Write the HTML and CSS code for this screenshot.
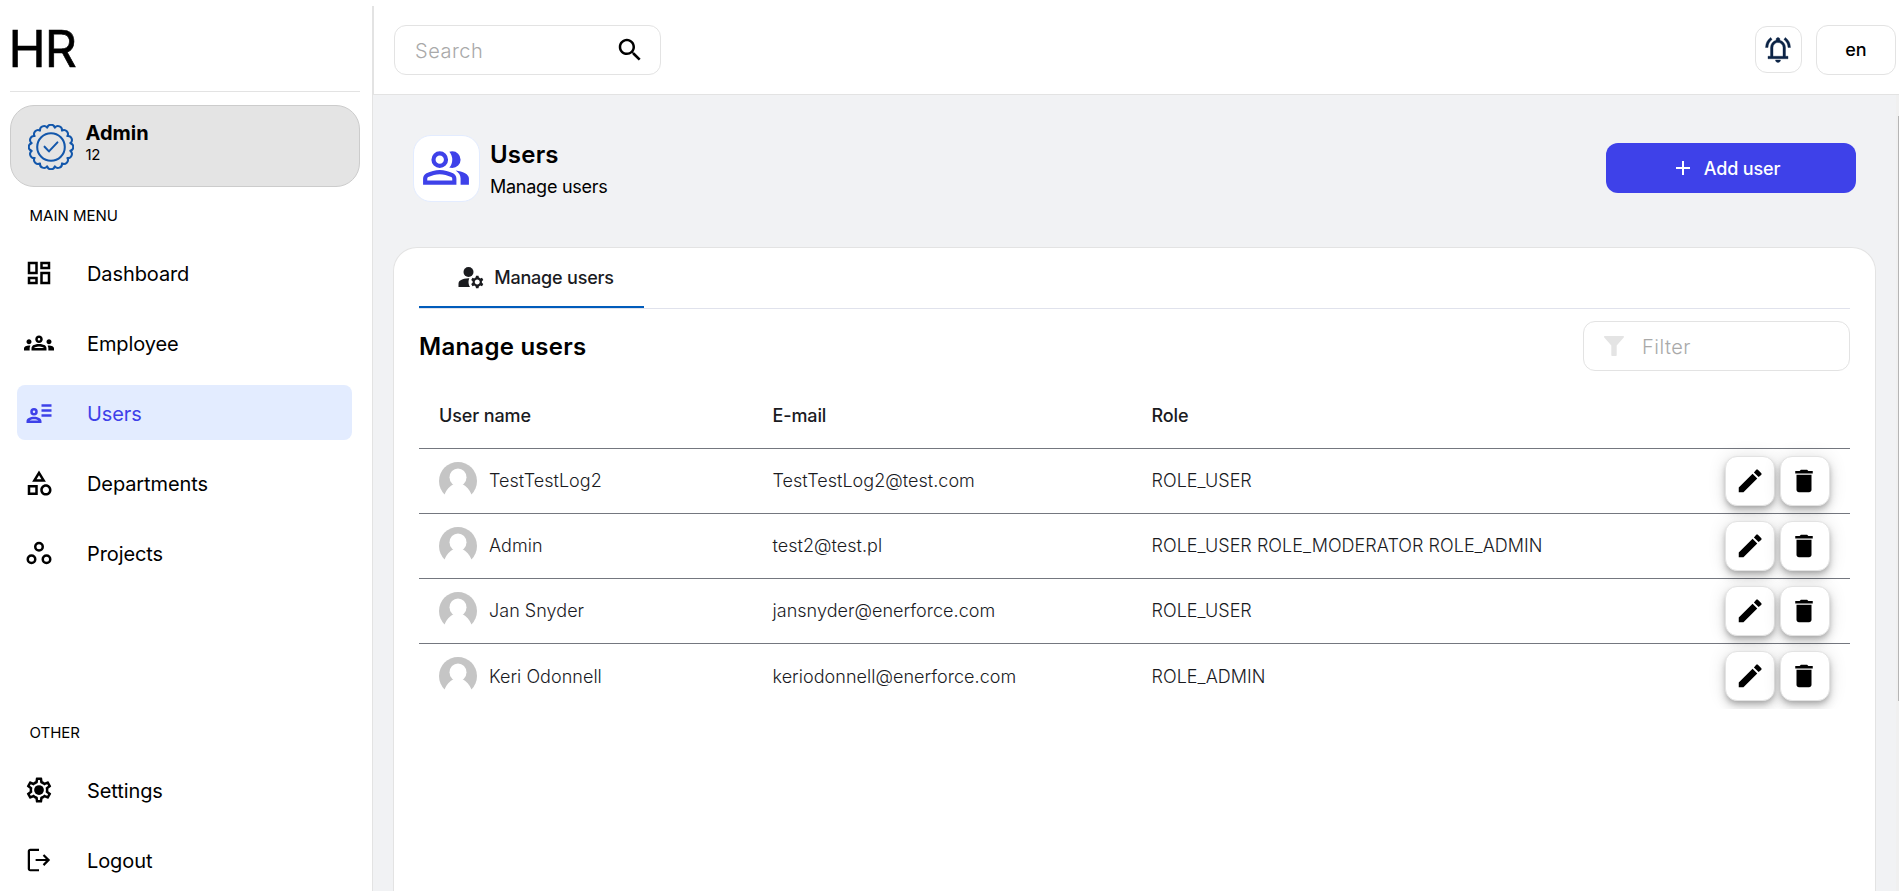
FILE: index.html
```html
<!DOCTYPE html>
<html lang="en">
<head>
<meta charset="utf-8">
<title>HR</title>
<link rel="stylesheet" href="styles.css">
</head>
<body>
<svg class="defs" aria-hidden="true">
  <symbol id="i-avatar" viewBox="0 0 38 38"><circle cx="19" cy="19" r="19" fill="#c5c5c5"/><ellipse cx="19" cy="15.3" rx="8.5" ry="8.9" fill="#fff"/><path fill="#fff" d="M5.6 32.3C7.6 27.6 10.4 24.2 14.6 22h8.8c4.2 2.200 7 5.600 9 10.300L38 38.500H0z"/></symbol>
  <symbol id="i-edit" viewBox="0 0 24 24"><path d="M3 17.250V21h3.750L17.810 9.940l-3.750-3.750L3 17.250zM20.900 7.200c.5-.5.5-1.200 0-1.700l-2.400-2.400c-.5-.5-1.200-.5-1.700 0l-1.670 2.020 3.750 3.750 2.020-1.670z"/></symbol>
  <symbol id="i-delete" viewBox="0 0 24 24"><path d="M6 19c0 1.100.9 2 2 2h8c1.100 0 2-.9 2-2V7H6v12zM19 4h-3.500l-1-1h-5l-1 1H5v2h14V4z"/></symbol>
</svg>
<aside class="sidebar">
  <div class="brand">HR</div>
  <div class="profile">
    <svg class="badge" viewBox="-22.500 -22.500 45 45">
      <path d="M18.930 -3.770A3.900 3.900 0 0 1 18.930 3.770A3.900 3.900 0 0 1 16.050 10.720A3.900 3.900 0 0 1 10.720 16.050A3.900 3.900 0 0 1 3.770 18.930A3.900 3.900 0 0 1 -3.770 18.930A3.900 3.900 0 0 1 -10.720 16.050A3.900 3.900 0 0 1 -16.050 10.720A3.900 3.900 0 0 1 -18.930 3.770A3.900 3.900 0 0 1 -18.930 -3.770A3.900 3.900 0 0 1 -16.050 -10.720A3.900 3.900 0 0 1 -10.720 -16.050A3.900 3.900 0 0 1 -3.770 -18.930A3.900 3.900 0 0 1 3.770 -18.930A3.900 3.900 0 0 1 10.720 -16.050A3.900 3.900 0 0 1 16.050 -10.720A3.900 3.900 0 0 1 18.930 -3.770Z"/>
      <circle r="13.500"/><path d="M-6.300 -.3L-2 4.300L6.300 -4.500"/>
    </svg>
    <div class="profile-text"><strong>Admin</strong><span>12</span></div>
  </div>
  <div class="group-label">MAIN MENU</div>
  <nav class="menu">
    <a class="item"><svg viewBox="0 0 24 24"><path d="M19 5v2h-4V5h4M9 5v6H5V5h4m10 8v6h-4v-6h4M9 17v2H5v-2h4M21 3h-8v6h8V3zM11 3H3v10h8V3zm10 8h-8v10h8V11zm-10 4H3v6h8v-6z"/></svg><span>Dashboard</span></a>
    <a class="item"><svg viewBox="0 0 24 24"><path d="M4,13c1.100,0,2-0.900,2-2c0-1.100-0.900-2-2-2s-2,0.900-2,2C2,12.100,2.900,13,4,13z M5.130,14.100C4.760,14.040,4.390,14,4,14c-0.990,0-1.930,0.210-2.780,0.580C0.480,14.900,0,15.620,0,16.430V18l4.500,0v-1.610C4.500,15.560,4.730,14.780,5.130,14.100z M20,13c1.100,0,2-0.900,2-2c0-1.100-0.900-2-2-2s-2,0.900-2,2C18,12.100,18.900,13,20,13z M24,16.430c0-0.810-0.480-1.530-1.220-1.850C21.930,14.210,20.990,14,20,14c-0.390,0-0.760,0.040-1.130,0.100c0.400,0.680,0.630,1.460,0.630,2.290V18l4.500,0V16.430z M16.240,13.650c-1.170-0.520-2.610-0.900-4.240-0.900c-1.630,0-3.070,0.390-4.240,0.900C6.680,14.130,6,15.210,6,16.390V18h12v-1.610C18,15.210,17.320,14.130,16.240,13.650z M8.070,16c0.090-0.230,0.130-0.390,0.910-0.690c0.970-0.380,1.990-0.560,3.020-0.560s2.050,0.180,3.020,0.560c0.770,0.300,0.810,0.460,0.910,0.690H8.070z M12,8c0.550,0,1,0.450,1,1s-0.450,1-1,1s-1-0.450-1-1S11.450,8,12,8 M12,6c-1.660,0-3,1.340-3,3c0,1.660,1.340,3,3,3s3-1.340,3-3C15,7.340,13.660,6,12,6z"/></svg><span>Employee</span></a>
    <a class="item active"><svg viewBox="0 0 24 24"><path d="M14 5h8v2h-8zM14 9h8v2h-8zM14 13h8v2h-8z"/><circle cx="8" cy="11" r="2" fill="none" stroke="currentColor" stroke-width="2"/><path fill-rule="evenodd" d="M2 20v-1.500C2 16.300 5 15 8 15s6 1.300 6 3.500V20zM4.500 18h7c-.8-.6-2.200-1-3.500-1s-2.700.4-3.500 1z"/></svg><span>Users</span></a>
    <a class="item"><svg viewBox="0 0 24 24"><path d="M12 2l-5.500 9h11L12 2zm0 3.840L13.930 9h-3.870L12 5.840zM17.500 13c-2.490 0-4.500 2.010-4.500 4.500s2.010 4.500 4.500 4.500 4.500-2.010 4.500-4.500-2.010-4.500-4.500-4.500zm0 7c-1.380 0-2.500-1.120-2.500-2.500s1.120-2.500 2.500-2.500 2.500 1.120 2.500 2.500-1.120 2.500-2.500 2.500zM3 21.500h8v-8H3v8zm2-6h4v4H5v-4z"/></svg><span>Departments</span></a>
    <a class="item"><svg viewBox="0 0 24 24" class="rings"><circle cx="12" cy="7" r="3"/><circle cx="6" cy="17" r="3"/><circle cx="18" cy="17" r="3"/></svg><span>Projects</span></a>
  </nav>
  <div class="group-label other">OTHER</div>
  <nav class="menu">
    <a class="item"><svg viewBox="0 0 24 24"><path d="M19.430 12.980c.04-.32.07-.64.07-.98 0-.34-.03-.66-.07-.98l2.110-1.650c.19-.15.24-.42.12-.64l-2-3.460c-.09-.16-.26-.25-.44-.25-.06 0-.12.01-.17.03l-2.490 1c-.52-.4-1.080-.73-1.690-.98l-.38-2.650C14.460 2.180 14.250 2 14 2h-4c-.25 0-.46.18-.49.42l-.38 2.650c-.61.25-1.170.59-1.690.98l-2.490-1c-.06-.02-.12-.03-.18-.03-.17 0-.34.09-.43.25l-2 3.460c-.13.22-.07.49.12.64l2.110 1.650c-.04.32-.07.65-.07.98 0 .33.03.66.07.98l-2.110 1.650c-.19.15-.24.42-.12.64l2 3.460c.09.16.26.25.44.25.06 0 .12-.01.17-.03l2.490-1c.52.4 1.080.73 1.690.98l.38 2.650c.03.24.24.42.49.42h4c.25 0 .46-.18.49-.42l.38-2.650c.61-.25 1.170-.59 1.690-.98l2.490 1c.06.02.12.03.18.03.17 0 .34-.09.43-.25l2-3.460c.12-.22.07-.49-.12-.64l-2.110-1.650zm-1.980-1.710c.04.31.05.52.05.73 0 .21-.02.43-.05.73l-.14 1.130.89.7 1.080.84-.7 1.210-1.270-.51-1.040-.42-.9.68c-.43.32-.84.56-1.250.73l-1.060.43-.16 1.130-.2 1.350h-1.400l-.19-1.350-.16-1.130-1.060-.43c-.43-.18-.83-.41-1.230-.71l-.91-.7-1.060.43-1.270.51-.7-1.210 1.080-.84.89-.7-.14-1.130c-.03-.31-.05-.54-.05-.74s.02-.43.05-.73l.14-1.130-.89-.7-1.080-.84.7-1.210 1.270.51 1.040.42.9-.68c.43-.32.84-.56 1.250-.73l1.060-.43.16-1.130.2-1.350h1.390l.19 1.350.16 1.130 1.060.43c.43.18.83.41 1.230.71l.91.7 1.060-.43 1.270-.51.7 1.210-1.070.85-.89.7.14 1.130z"/><circle cx="12" cy="12" r="3.900"/></svg><span>Settings</span></a>
    <a class="item"><svg viewBox="0 0 24 24"><path d="M5 21q-.825 0-1.412-.587T3 19V5q0-.825.588-1.412T5 3h7v1.700H4.800v14.600H12V21zm11.200-4.300l-1.200-1.300l2.500-2.550H9.300v-1.700h8.200l-2.500-2.550l1.200-1.300l4.700 4.700z"/></svg><span>Logout</span></a>
  </nav>
</aside>
<div class="page">
  <header class="topbar">
    <div class="search"><span>Search</span><svg viewBox="0 0 24 24"><path d="M15.500 14h-.79l-.28-.27C15.410 12.590 16 11.110 16 9.500 16 5.910 13.090 3 9.500 3S3 5.910 3 9.500 5.910 16 9.500 16c1.610 0 3.090-.59 4.230-1.570l.27.28v.79l5 4.990L20.490 19l-4.990-5zm-6 0C7.010 14 5 11.990 5 9.500S7.010 5 9.500 5 14 7.010 14 9.500 11.990 14 9.500 14z"/></svg></div>
    <div class="tools">
      <button class="bell"><svg viewBox="0 0 24 24"><path d="M4 19v-2h2v-7q0-2.075 1.250-3.687T10.500 4.200v-.7q0-.625.438-1.062T12 2t1.063.438T13.500 3.500v.7q2 .5 3.250 2.113T18 10v7h2v2zm8 3q-.825 0-1.412-.587T10 20h4q0 .825-.587 1.413T12 22m-4-5h8v-7q0-1.650-1.175-2.825T12 6T9.175 7.175T8 10zM2 10q0-2.500 1.113-4.587T6.100 1.950l1.175 1.600q-1.500 1.100-2.387 2.775T4 10zm18 0q0-2-.888-3.675T16.726 3.550l1.175-1.600q1.875 1.375 2.988 3.463T22 10z"/></svg></button>
      <button class="lang">en</button>
    </div>
  </header>
  <main class="main">
    <section class="title-row">
      <div class="title-icon"><svg viewBox="0 0 24 24"><path d="M1 20v-2.800q0-.85.438-1.562T2.600 14.550q1.550-.775 3.150-1.162T9 13t3.250.388t3.150 1.162q.725.375 1.163 1.088T17 17.200V20zm18 0v-3q0-1.100-.612-2.113T16.650 13.150q1.275.15 2.400.513t2.100.887q.9.5 1.375 1.112T23 17v3zM9 12q-1.650 0-2.825-1.175T5 8t1.175-2.825T9 4t2.825 1.175T13 8t-1.175 2.825T9 12m10-4q0 1.650-1.175 2.825T15 12q-.275 0-.7-.062t-.7-.138q.675-.8 1.037-1.775T15 8t-.362-2.025T13.600 4.200q.35-.125.7-.163T15 4q1.650 0 2.825 1.175T19 8M3 18h12v-.8q0-.275-.137-.5t-.363-.35q-1.350-.675-2.725-1.012T9 15t-2.775.338T3.500 16.350q-.225.125-.363.35T3 17.200zm6-8q.825 0 1.413-.587T11 8t-.587-1.412T9 6t-1.412.588T7 8t.588 1.413T9 10"/></svg></div>
      <div class="title-text"><h1>Users</h1><p>Manage users</p></div>
      <button class="add"><svg viewBox="0 0 14 14"><path d="M6 0h2v6h6v2H8v6H6V8H0V6h6z"/></svg>Add user</button>
    </section>
    <section class="card">
      <div class="tabs"><div class="tab"><svg viewBox="0 0 24 24"><circle cx="10" cy="8" r="4"/><path d="M10.670 13.020C10.450 13.010 10.230 13 10 13c-2.420 0-4.680.67-6.610 1.820-.88.52-1.390 1.500-1.390 2.530V20h9.260c-.79-1.130-1.260-2.510-1.260-4 0-1.070.25-2.070.67-2.980zM20.750 16c0-.22-.03-.42-.06-.63l1.140-1.010-1-1.730-1.450.49c-.32-.27-.68-.48-1.080-.63L18 11h-2l-.3 1.490c-.4.15-.76.36-1.080.63l-1.450-.49-1 1.730 1.140 1.010c-.03.21-.06.41-.06.63s.03.42.06.63l-1.140 1.010 1 1.730 1.450-.49c.32.27.68.48 1.080.63L16 21h2l.3-1.490c.4-.15.76-.36 1.080-.63l1.450.49 1-1.730-1.140-1.010c.03-.21.06-.41.06-.63zM17 18c-1.100 0-2-.9-2-2s.9-2 2-2 2 .9 2 2-.9 2-2 2z"/></svg>Manage users</div></div>
      <div class="card-head"><h2>Manage users</h2>
        <div class="filter"><svg viewBox="0 0 20 20"><path d="M.8 0h18.400q.8 0 .8.800 0 .4-.3.800L12.700 9.500V19.200q0 .8-.8.800H8.100q-.8 0-.8-.8V9.500L.3 1.600Q0 1.200 0 .8 0 0 .8 0z"/></svg><span>Filter</span></div></div>
      <div class="table">
        <div class="row head"><span>User name</span><span>E-mail</span><span>Role</span></div>
        <div class="row"><span class="user"><svg><use href="#i-avatar"/></svg><span>TestTestLog2</span></span><span>TestTestLog2@test.com</span><span>ROLE_USER</span><div class="actions"><button class="edit"><svg><use href="#i-edit"/></svg></button><button><svg><use href="#i-delete"/></svg></button></div></div>
        <div class="row"><span class="user"><svg><use href="#i-avatar"/></svg><span>Admin</span></span><span>test2@test.pl</span><span>ROLE_USER ROLE_MODERATOR ROLE_ADMIN</span><div class="actions"><button class="edit"><svg><use href="#i-edit"/></svg></button><button><svg><use href="#i-delete"/></svg></button></div></div>
        <div class="row"><span class="user"><svg><use href="#i-avatar"/></svg><span>Jan Snyder</span></span><span>jansnyder@enerforce.com</span><span>ROLE_USER</span><div class="actions"><button class="edit"><svg><use href="#i-edit"/></svg></button><button><svg><use href="#i-delete"/></svg></button></div></div>
        <div class="row last"><span class="user"><svg><use href="#i-avatar"/></svg><span>Keri Odonnell</span></span><span>keriodonnell@enerforce.com</span><span>ROLE_ADMIN</span><div class="actions"><button class="edit"><svg><use href="#i-edit"/></svg></button><button><svg><use href="#i-delete"/></svg></button></div></div>
      </div>
    </section>
    <div class="scrollbar"><div class="thumb"></div></div>
  </main>
</div>
</body>
</html>
```
FILE: styles.css
```css
* { box-sizing: border-box; }
html, body { height: 100%; }
body {
  margin: 0;
  padding-top: 6px;
  display: flex;
  overflow: hidden;
  background: #fff;
  color: #000;
  font-family: Inter, sans-serif;
}
h1, h2, p { margin: 0; }
button { font-family: inherit; padding: 0; margin: 0; background: #fff; color: #000; }
svg { display: block; flex: none; fill: currentColor; }
.defs { position: absolute; width: 0; height: 0; }

/* Sidebar */
.sidebar { flex: none; width: 373px; padding: 0 12px 0 10px; border-right: 1px solid #e3e3e3; overflow: hidden; }
.brand { height: 86px; padding-top: 13px; border-bottom: 1px solid #e3e3e3; font-size: 50px; line-height: 60px; letter-spacing: -1px; text-indent: -1.5px; -webkit-text-stroke: .6px #000; }
.profile {
  height: 82px; margin-top: 13px; padding-left: 18px;
  display: flex; gap: 12px;
  background: #e4e4e4; border: 1px solid #ccc; border-radius: 24px;
}
.badge { width: 46px; height: 46px; margin: 18px -.5px 0 -1px; fill: none; stroke: #1357ab; stroke-width: 2; stroke-linejoin: round; stroke-linecap: round; }
.profile-text { display: flex; flex-direction: column; padding-top: 15px; }
.profile-text strong { font-size: 20px; line-height: 24px; font-weight: 700; }
.profile-text span { font-size: 15px; line-height: 20px; letter-spacing: -.3px; }
.group-label { margin: 19px 0 0 19.500px; font-size: 15px; line-height: 20px; height: 20px; }
.menu { display: flex; flex-direction: column; gap: 15px; padding: 19px 8px 0 7px; }
.item { height: 55px; display: flex; align-items: center; gap: 32px; padding-left: 7px; border-radius: 8px; font-size: 20px; }
.item span { padding: 2px 0 0 1px; letter-spacing: -.1px; }
.item svg { width: 30px; height: 30px; }
.item.active { background: #e3ecff; color: #3e41e9; }
.rings { fill: none; stroke: currentColor; stroke-width: 2; }
.group-label.other { margin-top: 143px; }

/* Top bar */
.page { flex: 1; min-width: 0; display: flex; flex-direction: column; }
.topbar {
  flex: none; height: 89px; padding: 18px 3px 0 20px;
  display: flex; justify-content: space-between; align-items: flex-start;
  border-left: 1px solid #e3e3e3; border-bottom: 1px solid #e3e3e3;
}
.search {
  width: 267px; height: 50px; margin-top: 1px; padding: 0 15px 0 20px;
  display: flex; align-items: center; justify-content: space-between;
  border: 1px solid #e3e3e3; border-radius: 12px;
}
.search span, .filter span { padding-top: 2px; color: #a9a9a9; font-size: 20px; font-weight: 300; letter-spacing: .5px; }
.search svg { width: 30px; height: 30px; }
.tools { display: flex; gap: 14px; align-items: flex-start; margin-top: 1px; }
.bell { width: 47px; height: 47px; margin-top: 1px; padding-right: 1px; display: grid; place-items: center; border: 1px solid #e3e3e3; border-radius: 12px; color: #0b2345; }
.bell svg { width: 30px; height: 30px; stroke: currentColor; stroke-width: .3; }
.lang { width: 80px; height: 50px; padding-bottom: 1px; border: 1px solid #e3e3e3; border-radius: 12px; font-size: 18px; font-weight: 500; }

/* Content */
.main { flex: 1; min-height: 0; position: relative; display: flex; flex-direction: column; padding: 40px 23px 0 20px; background: #f1f2f4; }
.title-row { flex: none; display: flex; align-items: center; padding: 0 20px; height: 66px; }
.title-icon { width: 67px; height: 67px; padding-right: 1px; display: grid; place-items: center; background: #fff; border: 1px solid #e3ecff; border-radius: 18px; color: #3e41e9; }
.title-icon svg { width: 50px; height: 50px; }
.title-text { margin-left: 10px; padding-top: 1px; }
.title-text h1 { font-size: 24px; line-height: 32px; font-weight: 600; letter-spacing: .2px; }
.title-text p { font-size: 18px; line-height: 24px; margin-top: 4px; letter-spacing: -.25px; }
.add {
  margin-left: auto; width: 250px; height: 50px;
  display: flex; align-items: center; justify-content: center; gap: 14px; padding-right: 6px;
  border: 0; border-radius: 12px; background: #3e41e9; color: #fff; font-size: 18px; font-weight: 500; letter-spacing: -.15px;
}
.add svg { width: 14px; height: 14px; }
.card { flex: 1; min-height: 0; margin-top: 46px; padding: 0 25px; background: #fff; border: 1px solid #e3e3e3; border-bottom: 0; border-radius: 24px 24px 0 0; }
.tabs { height: 61px; border-bottom: 1px solid #e0e2ec; }
.tab {
  width: 225px; height: 60px; padding-left: 7px;
  display: flex; align-items: center; justify-content: center; gap: 8px;
  border-bottom: 2px solid #005cbb; color: #1a1b1f; font-size: 18px; font-weight: 500; letter-spacing: -.2px;
}
.tab svg { width: 30px; height: 30px; }
.card-head { height: 50px; margin-top: 12px; display: flex; align-items: center; justify-content: space-between; }
.card-head h2 { font-size: 24px; font-weight: 600; line-height: 30px; letter-spacing: .25px; padding-top: 1px; }
.filter { width: 267px; height: 50px; padding-left: 20px; display: flex; align-items: center; gap: 18px; border: 1px solid #e3e3e3; border-radius: 12px; }
.filter svg { width: 20px; height: 20px; color: #e4e4e4; }

/* Users table */
.table { margin-top: 7px; overflow: hidden; }
.row {
  height: 65px; padding: 0 20px;
  display: grid; grid-template-columns: 333.500px 379px 1fr auto; align-items: center;
  border-bottom: 1px solid #74777f; color: #1a1b1f;
  font-size: 18px; font-weight: 300; letter-spacing: .03px;
}
.row > span:not(.user), .user span { padding-bottom: 1px; }
.row.head { height: 71px; padding-top: 6px; font-weight: 500; letter-spacing: -.12px; }
.row.last { border-bottom: 0; padding-bottom: 1px; }
.row.last > span:not(.user), .row.last .user span { padding: 1px 0 0; }
.user { display: flex; align-items: center; gap: 12px; }
.user svg { width: 38px; height: 38px; }
.actions { display: flex; gap: 5px; }
.actions button {
  width: 50px; height: 50px; padding-right: 2px; display: grid; place-items: center;
  border: 1px solid #e3e3e3; border-radius: 12px;
  box-shadow: 0 3px 5px -1px rgba(0,0,0,.2), 0 6px 10px 0 rgba(0,0,0,.14), 0 1px 18px 0 rgba(0,0,0,.12);
}
.actions .edit { padding-right: 0; }
.actions svg { width: 30px; height: 30px; }

.scrollbar { position: absolute; top: 0; right: 0; bottom: 0; width: 3px; padding-top: 21px; background: #f0f0f0; }
.thumb { width: 1px; height: 585px; margin-left: 2px; background: #b5b5b5; }
```
